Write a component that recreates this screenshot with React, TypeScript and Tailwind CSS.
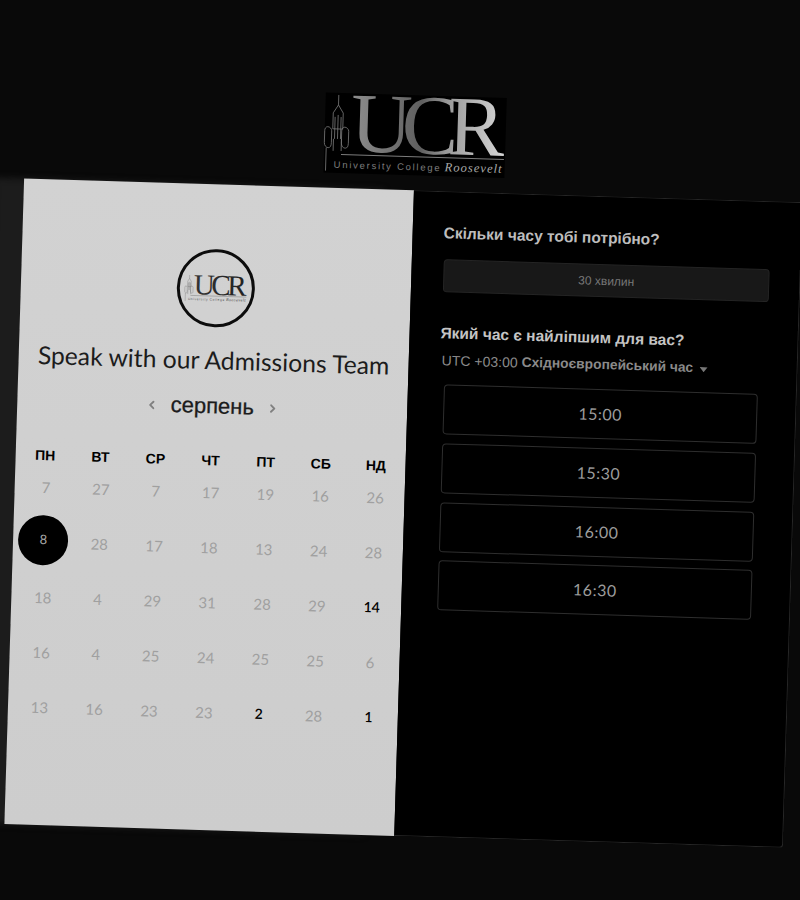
import { ChevronLeft, ChevronRight } from "lucide-react";

const weekDays = ["ПН", "ВТ", "СР", "ЧТ", "ПТ", "СБ", "НД"];

const days = [
  [7, 27, 7, 17, 19, 16, 26],
  [8, 28, 17, 18, 13, 24, 28],
  [18, 4, 29, 31, 28, 29, 14],
  [16, 4, 25, 24, 25, 25, 6],
  [13, 16, 23, 23, 2, 28, 1],
];

// row-col of the days that can be picked
const activeDays = ["2-6", "4-4", "4-6"];

const slots = ["15:00", "15:30", "16:00", "16:30"];

const UcrLogo = ({ id, dark }: { id: string; dark?: boolean }) => {
  const line = dark ? "#555555" : "#7c7c7c";
  return (
    <svg viewBox="0 0 181 80" className="block h-full w-full overflow-visible">
      <defs>
        <linearGradient id={id} x1="28" y1="0" x2="180" y2="0" gradientUnits="userSpaceOnUse">
          {dark ? (
            <>
              <stop offset="0" stopColor="#333333" />
              <stop offset="1" stopColor="#222222" />
            </>
          ) : (
            <>
              <stop offset="0" stopColor="#8c8c8c" />
              <stop offset="0.45" stopColor="#5f5f5f" />
              <stop offset="0.62" stopColor="#9a9a9a" />
              <stop offset="1" stopColor="#d6d6d6" />
            </>
          )}
        </linearGradient>
      </defs>
      {/* tower */}
      <g fill="none" stroke={line} strokeWidth="0.8">
        <path d="M13 2V12M13 12L8 20V36M13 12L18 20V36" />
        <path d="M8 36H18M10 24V46M16 24V46M13 22V46" />
        <path d="M3 34C1 34 0 36 0 38V50C0 53 2 55 4 55C6 55 7 53 7 50V38C7 36 5 34 3 34Z" />
        <path d="M20 34C18 34 17 36 17 38V50C17 53 19 55 21 55C23 55 24 53 24 50V38C24 36 22 34 20 34Z" />
        <path d="M9 46V58M17 46V58M2 55V78" />
      </g>
      <text
        x="26"
        y="58"
        fontFamily="'Liberation Serif', serif"
        fontSize="85"
        textLength="154"
        lengthAdjust="spacing"
        fill={`url(#${id})`}
      >
        UCR
      </text>
      <path d="M17 61.5H180" stroke={line} strokeWidth="1" />
      <text
        x="10"
        y="75"
        fontFamily="'Liberation Sans', sans-serif"
        fontSize="9.5"
        textLength="106"
        lengthAdjust="spacing"
        fill={line}
      >
        University College
      </text>
      <text
        x="121"
        y="75"
        fontFamily="'Liberation Serif', serif"
        fontSize="12.5"
        fontStyle="italic"
        textLength="57"
        lengthAdjust="spacing"
        fill={dark ? "#444444" : "#a8a8a8"}
      >
        Roosevelt
      </text>
    </svg>
  );
};

const Calendar = () => {
  return (
    <div className="mt-[30px] w-full px-[2px]">
      <div className="grid h-5 grid-cols-7 items-center">
        {weekDays.map((d) => (
          <div key={d} className="text-center font-['Liberation_Sans'] text-sm font-bold leading-5 text-black">
            {d}
          </div>
        ))}
      </div>
      <div className="ml-[2px] grid grid-cols-7 gap-y-[11px]">
        {days.map((row, r) =>
          row.map((day, c) => {
            const key = `${r}-${c}`;
            if (r === 1 && c === 0) {
              return (
                <div key={key} className="flex h-11 items-center justify-center">
                  <div className="mb-[5px] mr-[2px] flex h-[50px] w-[50px] shrink-0 items-center justify-center rounded-full bg-black text-[13px] text-[#a8a8a8]">
                    {day}
                  </div>
                </div>
              );
            }
            const active = activeDays.includes(key);
            return (
              <div
                key={key}
                className={
                  active
                    ? "flex h-11 items-center justify-center text-sm font-semibold text-black"
                    : "flex h-11 items-center justify-center text-[15px] text-[#a0a0a0]"
                }
              >
                {day}
              </div>
            );
          }),
        )}
      </div>
    </div>
  );
};

export default function App() {
  return (
    <div className="h-[900px] w-[800px] overflow-hidden bg-[#090909] font-['Lato']">
      <div className="h-[900px] w-[800px] rotate-[1.75deg] pl-4 pt-[95px]">
        <div className="w-[778px]">
          <div className="mx-auto h-20 w-[181px] bg-black">
            <UcrLogo id="ucr-big" />
          </div>
        </div>

        <div className="mt-[15px] flex h-[646px] w-[779px]">
          {/* left panel */}
          <div className="flex w-[390px] flex-col items-center bg-gradient-to-b from-[#d2d2d2] to-[#cdcdcd] pt-[65px] shadow-[-30px_0_6px_#1c1c1c]">
            <div className="flex h-[78px] w-[78px] items-center justify-center rounded-full border-[3px] border-[#0c0c0c]">
              <div className="h-[29px] w-[62px]">
                <UcrLogo id="ucr-small" dark />
              </div>
            </div>
            <h1 className="mt-[17px] whitespace-nowrap text-[24.7px] leading-8 text-[#1c1c1c]">
              Speak with our Admissions Team
            </h1>
            <div className="mt-4 flex h-7 items-center gap-[12px] font-['Liberation_Sans'] text-[#1c1c1c]">
              <ChevronLeft size={13} strokeWidth={3.5} className="text-[#808080]" />
              <span className="text-[22px] leading-7 [-webkit-text-stroke:0.3px_#1c1c1c]">серпень</span>
              <ChevronRight size={13} strokeWidth={3.5} className="text-[#808080]" />
            </div>
            <Calendar />
          </div>

          {/* right panel */}
          <div className="w-[389px] rounded-br-sm border-y border-r border-[#262626] bg-black pl-[31px] pt-[30px] font-['Liberation_Sans']">
            <h2 className="text-[15.5px] font-bold leading-[22px] text-[#bdbdbd]">Скільки часу тобі потрібно?</h2>
            <div className="ml-[1px] mt-[15px] flex h-[33px] w-[326px] items-center justify-center rounded-sm border border-[#242424] bg-[#181818] text-xs text-[#777777]">
              30 хвилин
            </div>
            <h2 className="mt-[30px] text-[15.5px] font-bold leading-[22px] text-[#c4c4c4]">
              Який час є найліпшим для вас?
            </h2>
            <div className="ml-[2px] mt-[6px] flex h-5 items-center text-sm leading-5 text-[#8a8a8a]">
              <span>UTC +03:00</span>
              <span className="ml-[4px] text-[13.8px] font-bold">Східноєвропейський час</span>
              <svg viewBox="0 0 8 5" className="ml-[6px] mt-[3px] h-[5px] w-2 fill-[#777777]">
                <path d="M0 0H8L4 5Z" />
              </svg>
            </div>
            <div className="ml-[5px] mt-[14px] flex w-[314px] flex-col gap-[8.75px]">
              {slots.map((s) => (
                <div
                  key={s}
                  className="flex h-[50px] items-center justify-center rounded-sm border border-[#2e2e2e] font-['Lato'] text-base tracking-[0.5px] text-[#9c9c9c]"
                >
                  {s}
                </div>
              ))}
            </div>
          </div>
        </div>
      </div>
    </div>
  );
}
